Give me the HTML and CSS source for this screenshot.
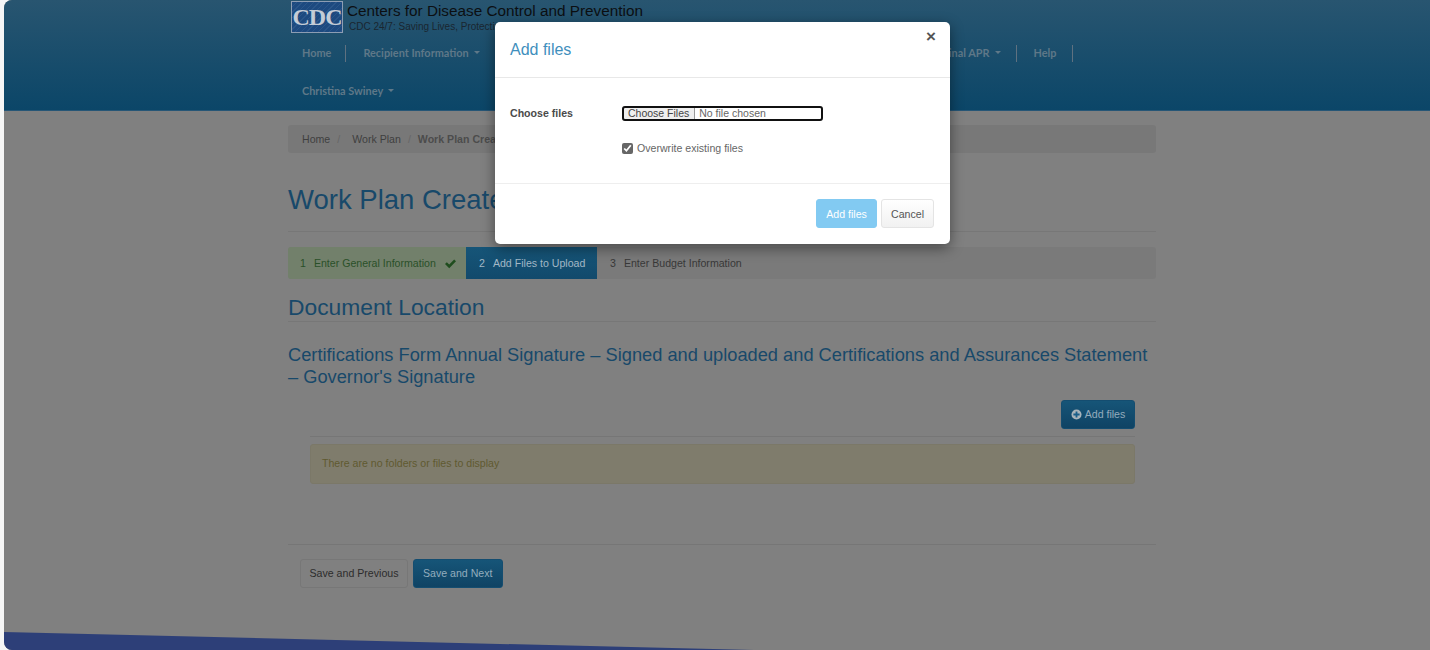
FILE: index.html
```html
<!DOCTYPE html>
<html lang="en">
<head>
  <meta charset="UTF-8" />
  <title>Work Plan Create</title>
  <link rel="stylesheet" href="styles.css">
</head>
<body>
  <div class="page">

    <!-- HEADER -->
    <header class="site-header">
      <div class="brand">
        <div class="logo">CDC</div>
        <div class="brand-text">
          <div class="brand-name">Centers for Disease Control and Prevention</div>
          <div class="brand-tag">CDC 24/7: Saving Lives, Protecting People</div>
        </div>
      </div>
      <nav class="nav-row">
        <a class="nav-item">Home</a>
        <a class="nav-item">Recipient Information <span class="caret"></span></a>
        <div class="nav-hidden"></div>
        <a class="nav-item">Final APR <span class="caret"></span></a>
        <a class="nav-item">Help</a>
      </nav>
      <nav class="nav-row">
        <a class="nav-item no-line">Christina Swiney <span class="caret"></span></a>
      </nav>
    </header>

    <!-- CONTENT -->
    <main class="content">
      <div class="breadcrumb">
        <span>Home</span><i>/</i><span>Work Plan</span><i>/</i><b>Work Plan Create</b>
      </div>

      <h1>Work Plan Create</h1>

      <div class="steps">
        <div class="step done">
          <span class="num">1</span>Enter General Information
          <svg class="check" viewBox="0 0 14 12"><path d="M1 6.5l2-2 2.6 2.6L11 1.5l2 2-7.4 7.6z"/></svg>
        </div>
        <div class="step active"><span class="num">2</span>Add Files to Upload</div>
        <div class="step"><span class="num">3</span>Enter Budget Information</div>
      </div>

      <h2>Document Location</h2>
      <h3>Certifications Form Annual Signature – Signed and uploaded and Certifications and Assurances Statement – Governor's Signature</h3>

      <div class="files-panel">
        <div class="files-bar">
          <button class="btn btn-blue">
            <svg class="plus" viewBox="0 0 12 12"><circle cx="6" cy="6" r="5.5" fill="#a9b4bb"/><path d="M5 2.6h2V5h2.4v2H7v2.4H5V7H2.6V5H5z" fill="#1a5f8a"/></svg>Add files
          </button>
        </div>
        <div class="alert">There are no folders or files to display</div>
      </div>

      <div class="form-actions">
        <button class="btn btn-grey">Save and Previous</button>
        <button class="btn btn-blue">Save and Next</button>
      </div>
    </main>

    <svg class="footer-band" viewBox="0 0 750 18" preserveAspectRatio="none"><path d="M0 0L750 18H0z"/></svg>

    <!-- ADD FILES MODAL -->
    <div class="modal">
      <div class="modal-head">
        <span class="modal-title">Add files</span>
        <span class="modal-close">×</span>
      </div>
      <div class="modal-body">
        <div class="form-row">
          <label class="form-label">Choose files</label>
          <input type="file" class="file-input" multiple>
        </div>
        <div class="check-row">
          <input type="checkbox" checked>
          <span>Overwrite existing files</span>
        </div>
      </div>
      <div class="modal-foot">
        <button class="btn btn-light-blue">Add files</button>
        <button class="btn btn-white">Cancel</button>
      </div>
    </div>

  </div>
</body>
</html>
```

FILE: styles.css
```css
* {
  box-sizing: border-box;
}
html, body {
  height: 100%;
}
body {
  margin: 0;
  background: #f6f6f6;
  font-family: "Liberation Sans", Arial, sans-serif;
  overflow: hidden;
}

.page {
  position: relative;
  margin-left: 4px;
  height: 650px;
  background: #808080;
  border-radius: 8px 0 0 8px;
  overflow: hidden;
}

/* Header */
.site-header {
  height: 111px;
  padding-left: 287px;
  background: linear-gradient(to bottom, #285570, #0b4668);
  border-bottom: 1px solid #265676;
}

.brand {
  display: flex;
  height: 34px;
  padding-top: 1px;
}

.logo {
  width: 52px;
  height: 32px;
  background: repeating-linear-gradient(135deg, #1d4a80 0 3px, #2a5689 3px 4px);
  border: 1px solid #8d9db3;
  color: #c4ccd6;
  font-family: "Liberation Serif", serif;
  font-weight: bold;
  font-size: 24px;
  line-height: 30px;
  text-align: center;
  letter-spacing: -1px;
  overflow: hidden;
}

.brand-text {
  margin-left: 4px;
  color: #0c0f12;
}

.brand-name {
  font-size: 15.3px;
  line-height: 19px;
}

.brand-tag {
  font-size: 10px;
  line-height: 12px;
  margin: 1px 0 0 2px;
  color: #1a2630;
}

.nav-row {
  display: flex;
  align-items: center;
  height: 38px;
}

.nav-item {
  display: flex;
  align-items: center;
  gap: 4px;
  height: 17px;
  padding: 0 15px 1px 17px;
  border-right: 1px solid #5f7180;
  color: #5f7888;
  font-family: Lato, sans-serif;
  font-size: 10.9px;
  font-weight: bold;
  white-space: nowrap;
}

.nav-item:first-child {
  padding-left: 11px;
  padding-right: 14px;
}

.nav-item.no-line {
  border-right: 0;
}

.nav-hidden {
  width: 430px;
}

.caret {
  width: 0;
  height: 0;
  margin-left: 1px;
  border-top: 3px solid #5f7888;
  border-left: 3px solid transparent;
  border-right: 3px solid transparent;
}

/* Content */
.content {
  width: 868px;
  margin-left: 284px;
  color: #333;
}

.breadcrumb {
  display: flex;
  align-items: center;
  height: 28px;
  margin-top: 14px;
  padding-left: 14px;
  background: #787878;
  border-radius: 3px;
  color: #3f3f3f;
  font-size: 10.6px;
  white-space: nowrap;
}

.breadcrumb i {
  margin: 0 12px 0 7px;
  color: #666;
  font-style: normal;
}

.breadcrumb b {
  margin-left: -5px;
  color: #4c4c4c;
}

h1, h2, h3 {
  margin: 0;
  font-weight: normal;
  color: #18496a;
}

h1 {
  height: 79px;
  padding-top: 31px;
  border-bottom: 1px solid #777;
  font-size: 27.5px;
  line-height: 32px;
}

.steps {
  display: flex;
  height: 32px;
  margin-top: 15px;
  background: #7a7a7a;
  border-radius: 3px;
  overflow: hidden;
  font-size: 10.6px;
  white-space: nowrap;
}

.step {
  display: flex;
  align-items: center;
  padding: 0 12px 0 13px;
  color: #383838;
}

.step .num {
  margin-right: 8px;
}

.step.done {
  width: 178px;
  padding-left: 12px;
  background: #72806b;
  color: #2a5029;
}

.step.active {
  width: 131px;
  background: linear-gradient(to bottom, #165578, #124a6c);
  color: #a3b8c6;
}

.check {
  width: 13px;
  height: 11px;
  margin-left: 8px;
  flex: none;
  fill: #1f4d1e;
}

h2 {
  height: 43px;
  padding-top: 15px;
  border-bottom: 1px solid #777;
  font-size: 22.8px;
  line-height: 27px;
}

h3 {
  margin-top: 22px;
  font-size: 18.25px;
  line-height: 22px;
}

.files-panel {
  margin: 0 21px 0 22px;
}

.files-bar {
  display: flex;
  justify-content: flex-end;
  height: 37px;
  margin-top: 12px;
  border-bottom: 1px solid #767676;
}

.files-bar .btn {
  width: 74px;
  padding: 0 0 1px;
}

.alert {
  height: 40px;
  margin-top: 7px;
  padding-left: 11px;
  background: #7f7c6c;
  border: 1px solid #7b7868;
  border-radius: 3px;
  color: #5f5a30;
  font-size: 10.6px;
  line-height: 36px;
}

.form-actions {
  display: flex;
  gap: 5px;
  height: 45px;
  margin-top: 60px;
  padding: 14px 0 0 12px;
  border-top: 1px solid #767676;
}

/* Buttons */
.btn {
  display: inline-flex;
  align-items: center;
  justify-content: center;
  height: 29px;
  padding: 0 9px 1px;
  border: 1px solid transparent;
  border-radius: 3px;
  font-family: inherit;
  font-size: 10.6px;
  white-space: nowrap;
}

.btn-blue {
  background: linear-gradient(to bottom, #165578, #0f4364);
  border-color: #144d70;
  color: #93acbd;
}

.btn-grey {
  width: 108px;
  padding: 0 0 1px;
  background: #808080;
  border-color: #777;
  color: #2c2c2c;
}

.btn-light-blue {
  min-width: 61px;
  background: #82caf2;
  border-color: #82caf2;
  color: #fff;
}

.btn-white {
  background: linear-gradient(to bottom, #fff, #f1f1f1);
  border-color: #e4e4e4;
  color: #555;
}

.plus {
  width: 11px;
  height: 11px;
  margin-right: 3px;
}

.footer-band {
  position: absolute;
  left: 0;
  bottom: 0;
  width: 750px;
  height: 18px;
  fill: #2d3f78;
}

/* Modal */
.modal {
  position: absolute;
  top: 22px;
  left: 491px;
  width: 455px;
  height: 222px;
  background: #fff;
  border-radius: 5px;
  box-shadow: 0 4px 14px rgba(0,0,0,0.45);
  color: #666;
}

.modal-head {
  position: relative;
  height: 56px;
  padding: 18px 15px 0;
  border-bottom: 1px solid #e8e8e8;
}

.modal-title {
  color: #3f8fbd;
  font-size: 16px;
  line-height: 20px;
}

.modal-close {
  position: absolute;
  top: 5px;
  right: 14px;
  color: #555;
  font-size: 17px;
  font-weight: bold;
}

.modal-body {
  height: 106px;
  padding: 27px 15px 0;
  border-bottom: 1px solid #eee;
}

.form-row {
  display: flex;
  align-items: center;
  height: 16px;
}

.form-label {
  width: 112px;
  color: #4a4a4a;
  font-size: 10.6px;
  font-weight: bold;
}

.file-input {
  width: 201px;
  height: 15px;
  padding: 0;
  outline: 2px solid #111;
  outline-offset: -2px;
  border-radius: 3px;
  color: #666;
  font-family: inherit;
  font-size: 10.5px;
  line-height: 15px;
}

.file-input::file-selector-button {
  height: 15px;
  margin-right: 4px;
  padding: 0 5px 2px 6px;
  background: #efefef;
  border: 0;
  border-right: 1px solid #999;
  color: #444;
  font-size: 10.5px;
  vertical-align: middle;
}

.check-row {
  display: flex;
  align-items: center;
  gap: 4px;
  margin: 19px 0 0 112px;
  height: 16px;
  font-size: 10.6px;
}

.check-row input {
  width: 11px;
  height: 11px;
  margin: 0;
  accent-color: #666;
}

.modal-foot {
  display: flex;
  justify-content: flex-end;
  gap: 4px;
  padding: 15px 16px 0 0;
}

.modal-foot .btn {
  padding-bottom: 0;
}
```
